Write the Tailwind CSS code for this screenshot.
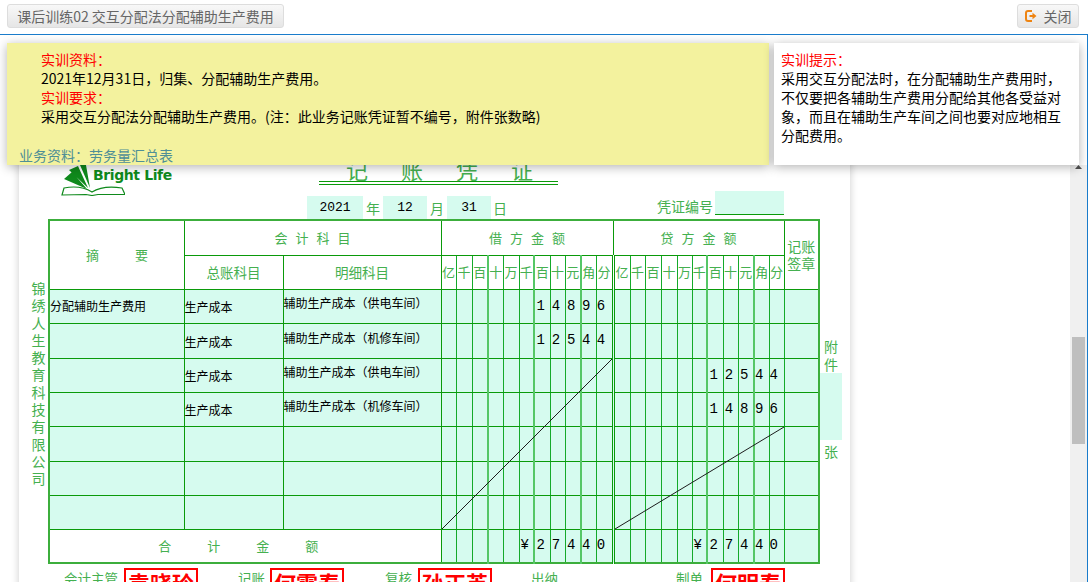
<!DOCTYPE html>
<html lang="zh">
<head>
    <meta charset="UTF-8">
    <title>课后训练02</title>
    <script src="https://cdn.jsdelivr.net/npm/@tailwindcss/browser@4"></script>
</head>
<body class="bg-white font-['Noto_Sans_CJK_SC','Liberation_Sans',sans-serif] text-[14px] text-black overflow-hidden">
<div class="w-[1088px] h-[582px] flex flex-col overflow-hidden">

    <!-- top bar -->
    <header class="h-[35px] shrink-0 flex justify-between items-start pt-[4px] pl-[7px] pr-[9px] border-b border-[#1a7ccb]">
        <button class="h-[24px] w-[277px] rounded-[3px] border border-[#dddddd] bg-gradient-to-b from-[#f8f8f8] to-[#e6e6e6] text-[#666666] text-[14px] leading-[22px] whitespace-nowrap">课后训练02 交互分配法分配辅助生产费用</button>
        <button class="h-[24px] w-[62px] rounded-[3px] border border-[#dddddd] bg-gradient-to-b from-[#f8f8f8] to-[#e6e6e6] text-[#666666] text-[14px] leading-[22px] flex items-center justify-center gap-[7px]">
            <svg class="w-[12px] h-[12px]" viewBox="0 0 12 12" fill="none">
                <path d="M7 1H3a2 2 0 0 0-2 2v6a2 2 0 0 0 2 2h4" stroke="#ee8412" stroke-width="2"/>
                <path d="M4.500 5h3V2.800L11.500 6l-4 3.200V7h-3z" fill="#ee8412"/>
            </svg>
            关闭
        </button>
    </header>

    <main class="relative flex-1 min-h-0 flex border-r border-[#1a7ccb] overflow-hidden">

        <!-- overlay with task text -->
        <div class="absolute top-0 left-0 right-0 h-[130px] bg-white z-10 flex pt-[8px] pl-[7px] gap-[5px]">
            <div class="w-[762px] h-[122px] bg-[#f3f29e] shadow-[0_2px_10px_rgba(0,0,0,0.3)] flex flex-col pt-[7px] leading-[19px]">
                <div class="pl-[34px]">
                    <p class="text-[#ff0000]">实训资料：</p>
                    <p>2021年12月31日，归集、分配辅助生产费用。</p>
                    <p class="text-[#ff0000]">实训要求：</p>
                    <p>采用交互分配法分配辅助生产费用。(注：此业务记账凭证暂不编号，附件张数略)</p>
                </div>
                <p class="mt-auto pl-[12px] text-[#4f8f96]">业务资料：劳务量汇总表</p>
            </div>
            <div class="w-[305px] h-[122px] bg-white shadow-[0_2px_10px_rgba(0,0,0,0.3)] pt-[7px] pl-[7px] pr-[4px] leading-[19px] whitespace-nowrap">
                <p class="text-[#ff0000]">实训提示：</p>
                <p>采用交互分配法时，在分配辅助生产费用时，<br>不仅要把各辅助生产费用分配给其他各受益对<br>象，而且在辅助生产车间之间也要对应地相互<br>分配费用。</p>
            </div>
        </div>

        <!-- voucher -->
        <div class="flex-1 min-w-0 overflow-hidden">
            <div class="ml-[19px] w-[831px] h-[700px] bg-white shadow-[0_0_8px_rgba(0,0,0,0.2)] pt-[123px] text-[#45b050]">

                <div class="flex h-[62px]">
                    <div class="relative ml-[42px] w-[246px] pt-[7px]">
                        <svg class="w-[64px] h-[31px]" viewBox="0 0 64 31" fill="none">
                            <path d="M19 0h6l4 23z M8 5l9-4 10 22z M3 14l8-7 15 17z" fill="#0f8a1c"/>
                            <path d="M1 30l2-7c10-2 20-1 28 4c8-5 18-6 30-4l3 6.500H37l-6 1-6-1z" stroke="#0f8a1c" stroke-width="1.200"/>
                        </svg>
                        <span class="absolute left-[32px] top-[7px] font-['DejaVu_Sans',sans-serif] font-bold text-[14px] tracking-[-0.400px] leading-[20px] text-[#0f8a1c] whitespace-nowrap">Bright Life</span>
                    </div>
                    <div class="w-[500px]">
                        <h1 class="ml-[12px] w-[239px] h-[27px] border-b-4 border-double border-[#0a9a0a] text-[22px] leading-[23px] font-normal text-center tracking-[33px] pl-[27px] whitespace-nowrap">记账凭证</h1>
                        <div class="flex items-start mt-[6px] h-[28px]">
                            <span class="mt-[5px] w-[56px] h-[23px] bg-[#d6fbef] text-black text-center font-['Liberation_Mono',monospace] text-[13px] leading-[23px]">2021</span>
                            <span class="mt-[5px] w-[20px] text-center leading-[25px]">年</span>
                            <span class="mt-[5px] w-[44px] h-[23px] bg-[#d6fbef] text-black text-center font-['Liberation_Mono',monospace] text-[13px] leading-[23px]">12</span>
                            <span class="mt-[5px] w-[20px] text-center leading-[25px]">月</span>
                            <span class="mt-[5px] w-[44px] h-[23px] bg-[#d6fbef] text-black text-center font-['Liberation_Mono',monospace] text-[13px] leading-[23px]">31</span>
                            <span class="mt-[5px] w-[18px] text-center leading-[25px]">日</span>
                            <span class="ml-[148px] w-[58px] leading-[30px]">凭证编号</span>
                            <span class="w-[69px] h-[24px] bg-[#d6fbef] border-b border-[#0a9a0a]"></span>
                        </div>
                    </div>
                </div>

                <div class="flex -mt-[1px]">
                    <p class="ml-[12px] mt-[61px] w-[15px] mr-[2px] text-[14px] leading-[17.300px] text-center">锦绣人生教育科技有限公司</p>
                    <div class="relative w-[770px] shrink-0">
                        <table id="voucher" class="table-fixed w-[770px] border-collapse border-2 border-[#3cae3c]"></table>
                        <svg class="absolute left-0 top-0 pointer-events-none" width="770" height="344" viewBox="0 0 770 344" fill="none">
                            <path d="M394 310L564 140" stroke="#1c1c1c"/>
                            <path d="M567 310L736 208" stroke="#1c1c1c"/>
                        </svg>
                    </div>
                    <div class="w-[22px] ml-[2px] pt-[118px] text-center leading-[18px]">
                        <p>附件</p>
                        <div class="h-[67px] bg-[#d6fbef]"></div>
                        <p class="mt-[2px]">张</p>
                    </div>
                </div>

                <div class="flex items-start mt-[4px] ml-[30px] leading-[18px] text-[13.500px]">
                    <span class="ml-[15px] mt-[1px] w-[56px] whitespace-nowrap">会计主管</span>
                    <span class="ml-[4px] w-[74px] h-[32px] border-2 border-[#ff0000] text-[#ff0000] font-bold text-[22px] leading-[25px] text-center">袁晓玲</span>
                    <span class="ml-[40px] mt-[1px] w-[28px] whitespace-nowrap">记账</span>
                    <span class="ml-[4px] w-[74px] h-[32px] border-2 border-[#ff0000] text-[#ff0000] font-bold text-[22px] leading-[25px] text-center">何霞春</span>
                    <span class="ml-[41px] mt-[1px] w-[28px] whitespace-nowrap">复核</span>
                    <span class="ml-[5px] w-[74px] h-[32px] border-2 border-[#ff0000] text-[#ff0000] font-bold text-[22px] leading-[25px] text-center">孙正英</span>
                    <span class="ml-[39px] mt-[1px] w-[28px] whitespace-nowrap">出纳</span>
                    <span class="ml-[117px] mt-[1px] w-[28px] whitespace-nowrap">制单</span>
                    <span class="ml-[7px] w-[74px] h-[32px] border-2 border-[#ff0000] text-[#ff0000] font-bold text-[22px] leading-[25px] text-center">何明春</span>
                </div>
            </div>
        </div>

        <!-- scrollbar -->
        <div class="w-[17px] shrink-0 bg-[#f0f0f0] pt-[130px]">
            <svg class="block ml-[5px]" width="7" height="4" viewBox="0 0 7 4"><path d="M3.500 0L7 4H0z" fill="#505050"/></svg>
            <div class="ml-[2px] mt-[168px] w-[13px] h-[107px] bg-[#bfbfbf]"></div>
        </div>
    </main>
</div>

<script>
    const debitWidths = ['w-[15px]', 'w-[16px]', 'w-[16px]', 'w-[15px]', 'w-[16px]', 'w-[15px]', 'w-[16px]', 'w-[15px]', 'w-[16px]', 'w-[15px]', 'w-[17px]'];
    const creditWidths = ['w-[17px]', 'w-[15px]', 'w-[16px]', 'w-[16px]', 'w-[15px]', 'w-[15px]', 'w-[16px]', 'w-[15px]', 'w-[16px]', 'w-[15px]', 'w-[15px]'];
    const units = ['亿', '千', '百', '十', '万', '千', '百', '十', '元', '角', '分'];

    const line = 'border border-[#0a9a0a]';
    const digitLine = 'border-y border-y-[#0a9a0a] border-l border-l-[#14aa2a] border-r border-r-[#14aa2a]';
    const thickLine = 'border-y border-y-[#0a9a0a] border-l border-l-[#14aa2a] border-r-2 border-r-[#55c766]';
    const doubleLine = 'border-y border-y-[#0a9a0a] border-l border-l-[#14aa2a] border-r-[3px] border-r-[#0a9a0a] border-double';

    // class of the cell border, per digit column
    function digitClass(side, i) {
        if (side === 'debit') {
            if (i === 10) return doubleLine;
            if (i === 2 || i === 5 || i === 8) return thickLine;
        } else if (i === 5 || i === 8) {
            return thickLine;
        }
        return digitLine;
    }

    function digitCells(side, value) {
        let html = '';
        const text = value.padStart(11, ' ');
        for (let i = 0; i < 11; i++) {
            const ch = text[i] === ' ' ? '' : text[i];
            const pad = i >= 9 ? 'pr-[6px]' : 'pr-[3px]';
            html += `<td class="${digitClass(side, i)} bg-[#d6fbef] p-0 ${pad} text-center font-['Liberation_Mono',monospace] text-[14px] text-black">${ch}</td>`;
        }
        return html;
    }

    function unitCells(side) {
        return units.map((u, i) => `<td class="${digitClass(side, i)} p-0 text-center text-[13px] text-[#45b050] whitespace-nowrap overflow-hidden">${u}</td>`).join('');
    }

    const rows = [
        ['h-[34px]', '分配辅助生产费用', '生产成本', '辅助生产成本（供电车间）', '14896', ''],
        ['h-[35px]', '', '生产成本', '辅助生产成本（机修车间）', '12544', ''],
        ['h-[34px]', '', '生产成本', '辅助生产成本（供电车间）', '', '12544'],
        ['h-[34px]', '', '生产成本', '辅助生产成本（机修车间）', '', '14896'],
        ['h-[35px]', '', '', '', '', ''],
        ['h-[34px]', '', '', '', '', ''],
        ['h-[34px]', '', '', '', '', '']
    ];

    let html = '<colgroup><col class="w-[135px]"><col class="w-[99px]"><col class="w-[158px]">';
    debitWidths.concat(creditWidths).forEach(w => { html += `<col class="${w}">`; });
    html += '<col class="w-[35px]"></colgroup>';

    html += `<tr class="h-[35px]">
        <td rowspan="2" class="${line} p-0 text-center text-[13px] tracking-[36px] pl-[36px] whitespace-nowrap">摘要</td>
        <td colspan="2" class="${line} text-center text-[13px] tracking-[8px] pl-[8px]">会计科目</td>
        <td colspan="11" class="${line} text-center text-[13px] tracking-[8px] pl-[8px]">借方金额</td>
        <td colspan="11" class="${line} text-center text-[13px] tracking-[8px] pl-[8px]">贷方金额</td>
        <td rowspan="2" class="${line} p-0 text-center text-[14px] leading-[17px]">记账<br>签章</td>
    </tr>`;
    html += `<tr class="h-[34px]">
        <td class="${line} text-center text-[13.500px]">总账科目</td>
        <td class="${line} text-center text-[13.500px]">明细科目</td>
        ${unitCells('debit')}${unitCells('credit')}
    </tr>`;

    rows.forEach(r => {
        html += `<tr class="${r[0]}">
            <td class="${line} bg-[#d6fbef] p-0 text-[12px] text-black whitespace-nowrap">${r[1]}</td>
            <td class="${line} bg-[#d6fbef] p-0 pt-[2px] text-[12px] text-black whitespace-nowrap">${r[2]}</td>
            <td class="${line} bg-[#d6fbef] p-0 pb-[6px] text-[12px] text-black whitespace-nowrap">${r[3]}</td>
            ${digitCells('debit', r[4])}${digitCells('credit', r[5])}
            <td class="${line} bg-[#d6fbef] p-0"></td>
        </tr>`;
    });

    html += `<tr class="h-[34px]">
        <td colspan="3" class="${line} text-center text-[13px] tracking-[36px] pl-[22px] whitespace-nowrap">合计金额</td>
        ${digitCells('debit', '¥27440')}${digitCells('credit', '¥27440')}
        <td class="${line} bg-[#d6fbef] p-0"></td>
    </tr>`;

    document.getElementById('voucher').innerHTML = html;
</script>
</body>
</html>
